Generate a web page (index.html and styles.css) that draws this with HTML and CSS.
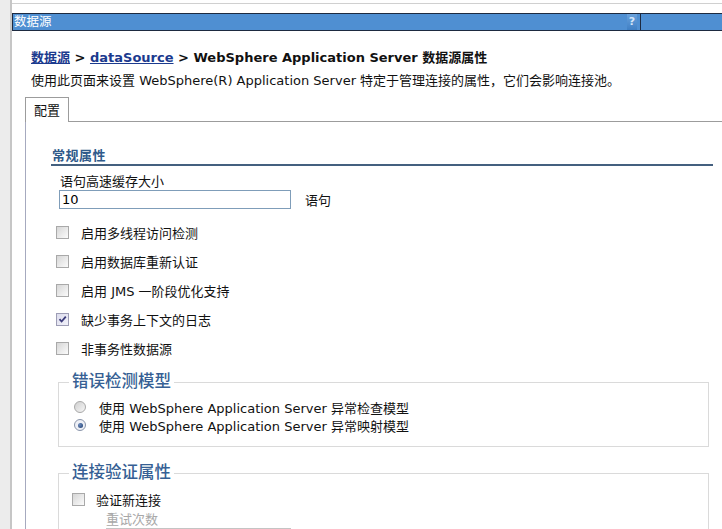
FILE: index.html
```html
<!DOCTYPE html>
<html lang="zh-CN">
<head>
<meta charset="utf-8">
<title>数据源</title>
<link rel="stylesheet" href="styles.css">
</head>
<body>
<div class="page">
  <div class="gutter"></div>
  <div class="main">
    <div class="topline"></div>
    <div class="titlebar">
      <div class="title-cell">
        <span class="title-text">数据源</span>
        <span class="help">?</span>
      </div>
      <div class="title-rest"></div>
    </div>
    <div class="content">
      <div class="crumb"><a href="#">数据源</a> &gt; <a href="#">dataSource</a> &gt; WebSphere Application Server 数据源属性</div>
      <div class="desc">使用此页面来设置 WebSphere(R) Application Server 特定于管理连接的属性，它们会影响连接池。</div>
      <div class="tabrow">
        <div class="tab">配置</div>
        <div class="tabfill"></div>
      </div>
      <div class="panel">
        <div class="section-head">常规属性</div>
        <div class="field-label">语句高速缓存大小</div>
        <div class="field-row">
          <input class="text-input" type="text" value="10">
          <span class="unit">语句</span>
        </div>
        <div class="checklist">
          <div class="check-row"><span class="cb"></span><span>启用多线程访问检测</span></div>
          <div class="check-row"><span class="cb"></span><span>启用数据库重新认证</span></div>
          <div class="check-row"><span class="cb"></span><span>启用 JMS 一阶段优化支持</span></div>
          <div class="check-row"><span class="cb checked"><svg viewBox="0 0 11 11" width="11" height="11"><path d="M2.5 5.2 L4.6 7.5 L8.8 2.6" fill="none" stroke="#3b3b7a" stroke-width="1.8"/></svg></span><span>缺少事务上下文的日志</span></div>
          <div class="check-row"><span class="cb"></span><span>非事务性数据源</span></div>
        </div>
        <fieldset class="group">
          <legend>错误检测模型</legend>
          <div class="radio-row"><span class="rb"></span><span>使用 WebSphere Application Server 异常检查模型</span></div>
          <div class="radio-row"><span class="rb on"></span><span>使用 WebSphere Application Server 异常映射模型</span></div>
        </fieldset>
        <fieldset class="group group2">
          <legend>连接验证属性</legend>
          <div class="check-row2"><span class="cb"></span><span>验证新连接</span></div>
          <div class="sub">
            <div class="sub-label">重试次数</div>
            <input class="text-input disabled" type="text" value="" disabled>
          </div>
        </fieldset>
      </div>
    </div>
  </div>
</div>
</body>
</html>
```
FILE: styles.css
```css
html, body {
  margin: 0;
  padding: 0;
  background: #ffffff;
  overflow: hidden;
}
body {
  font-family: "DejaVu Sans", "Noto Sans CJK SC", sans-serif;
  font-size: 13px;
  color: #111111;
  width: 722px;
  height: 529px;
}
.page {
  display: flex;
  height: 529px;
  overflow: hidden;
}
.gutter {
  width: 10px;
  flex: 0 0 10px;
  background: #ececec;
  border-right: 2px solid #c6c6c6;
}
.main {
  flex: 1;
  min-width: 0;
  display: flex;
  flex-direction: column;
  overflow: hidden;
}
.topline {
  height: 3px;
  flex: 0 0 3px;
  border-bottom: 1px solid #d0d0d0;
}
.titlebar {
  margin-top: 9px;
  display: flex;
  height: 16px;
  flex: 0 0 16px;
  background: #4f8fd2;
  border-top: 1px solid #1d2a40;
  border-bottom: 1px solid #1d2a40;
  border-left: 1px solid #1d2a40;
}
.title-cell {
  width: 628px;
  flex: 0 0 628px;
  border-right: 1px solid #1d2a40;
  display: flex;
  align-items: center;
  justify-content: space-between;
  padding-left: 1px;
  box-sizing: border-box;
}
.title-text {
  color: #ffffff;
  font-size: 12.5px;
  line-height: 16px;
}
.help {
  color: #d6e6f8;
  font-weight: bold;
  font-size: 11px;
  line-height: 16px;
  width: 10px;
  margin-right: 3px;
  text-align: center;
  background: linear-gradient(#6aa2dc, #3f7fc4);
}
.title-rest {
  flex: 1;
}
.content {
  padding-left: 13px;
  flex: 1;
  display: flex;
  flex-direction: column;
  min-height: 0;
}
.crumb {
  margin-top: 19px;
  padding-left: 6px;
  font-weight: bold;
  font-size: 13px;
  line-height: 16px;
  color: #111111;
  white-space: nowrap;
}
.crumb a {
  color: #1b3a8e;
  text-decoration: underline;
}
.desc {
  margin-top: 7px;
  padding-left: 6px;
  font-size: 13px;
  line-height: 16px;
  white-space: nowrap;
}
.tabrow {
  margin-top: 8px;
  display: flex;
  height: 25px;
  flex: 0 0 25px;
}
.tab {
  border: 1px solid #9c9c9c;
  border-bottom: none;
  padding-left: 8px;
  width: 34px;
  line-height: 25px;
  font-size: 13px;
}
.tabfill {
  flex: 1;
  border-bottom: 1px solid #9c9c9c;
}
.panel {
  border-left: 1px solid #a6aabf;
  padding: 26px 9px 0 25px;
  flex: 1;
  min-height: 0;
  overflow: hidden;
}
.section-head {
  font-weight: bold;
  font-size: 13px;
  line-height: 16px;
  color: #2f5a8a;
  padding-left: 1px;
  border-bottom: 2px solid #44607f;
  letter-spacing: 0.5px;
}
.field-label {
  margin-top: 8px;
  padding-left: 9px;
  line-height: 16px;
  font-size: 13px;
}
.field-row {
  display: flex;
  align-items: center;
  gap: 14px;
  padding-left: 8px;
}
.text-input {
  width: 232px;
  height: 19px;
  box-sizing: border-box;
  border: 1px solid #7f9db9;
  padding: 0 2px;
  font-family: "DejaVu Sans", "Noto Sans CJK SC", sans-serif;
  font-size: 13px;
  color: #000;
  margin: 0;
  background: #fff;
}
.text-input.disabled {
  border-color: #c4c4c4;
  width: 185px;
}
.unit {
  font-size: 13px;
}
.checklist {
  margin-top: 9px;
  padding-left: 5px;
}
.check-row {
  height: 29px;
  display: flex;
  align-items: center;
  gap: 12px;
  font-size: 13px;
}
.cb {
  width: 11px;
  height: 11px;
  flex: 0 0 11px;
  border: 1px solid #a9a9a9;
  background: linear-gradient(135deg, #d6d6d6 0%, #f0f0f0 70%, #fbfbfb 100%);
  display: inline-flex;
  align-items: center;
  justify-content: center;
}
.cb.checked {
  background: linear-gradient(135deg, #dcdcec 0%, #f2f2fa 100%);
  border-color: #9d9db5;
}
.group {
  margin: 9px 4px 0 7px;
  padding: 6px 10px 12px 10px;
  border: 1px solid #dadada;
  min-width: 0;
}
.group legend {
  padding: 0 3px;
  font-size: 16.5px;
  font-weight: 500;
  line-height: 20px;
  color: #365f94;
}
.radio-row {
  height: 18px;
  display: flex;
  align-items: center;
  gap: 13px;
  padding-left: 5px;
  font-size: 13px;
  white-space: nowrap;
}
.rb {
  width: 10px;
  height: 10px;
  flex: 0 0 10px;
  border-radius: 50%;
  border: 1px solid #a8a8a8;
  background: linear-gradient(135deg, #cfcfcf, #f6f6f6);
  display: inline-flex;
  align-items: center;
  justify-content: center;
}
.rb.on {
  border-color: #8a95aa;
  background: #eef0f6;
}
.rb.on::after {
  content: "";
  width: 5px;
  height: 5px;
  border-radius: 50%;
  background: radial-gradient(circle at 35% 35%, #6c8cbf, #1f3c6c);
}
.group2 {
  margin-top: 16px;
  padding-top: 7px;
  border-bottom: none;
}
.check-row2 {
  height: 18px;
  display: flex;
  align-items: center;
  gap: 11px;
  padding-left: 3px;
  font-size: 13px;
}
.sub {
  padding-left: 37px;
  margin-top: 4px;
}
.sub-label {
  color: #a8a8a8;
  line-height: 16px;
  font-size: 13px;
}
```
